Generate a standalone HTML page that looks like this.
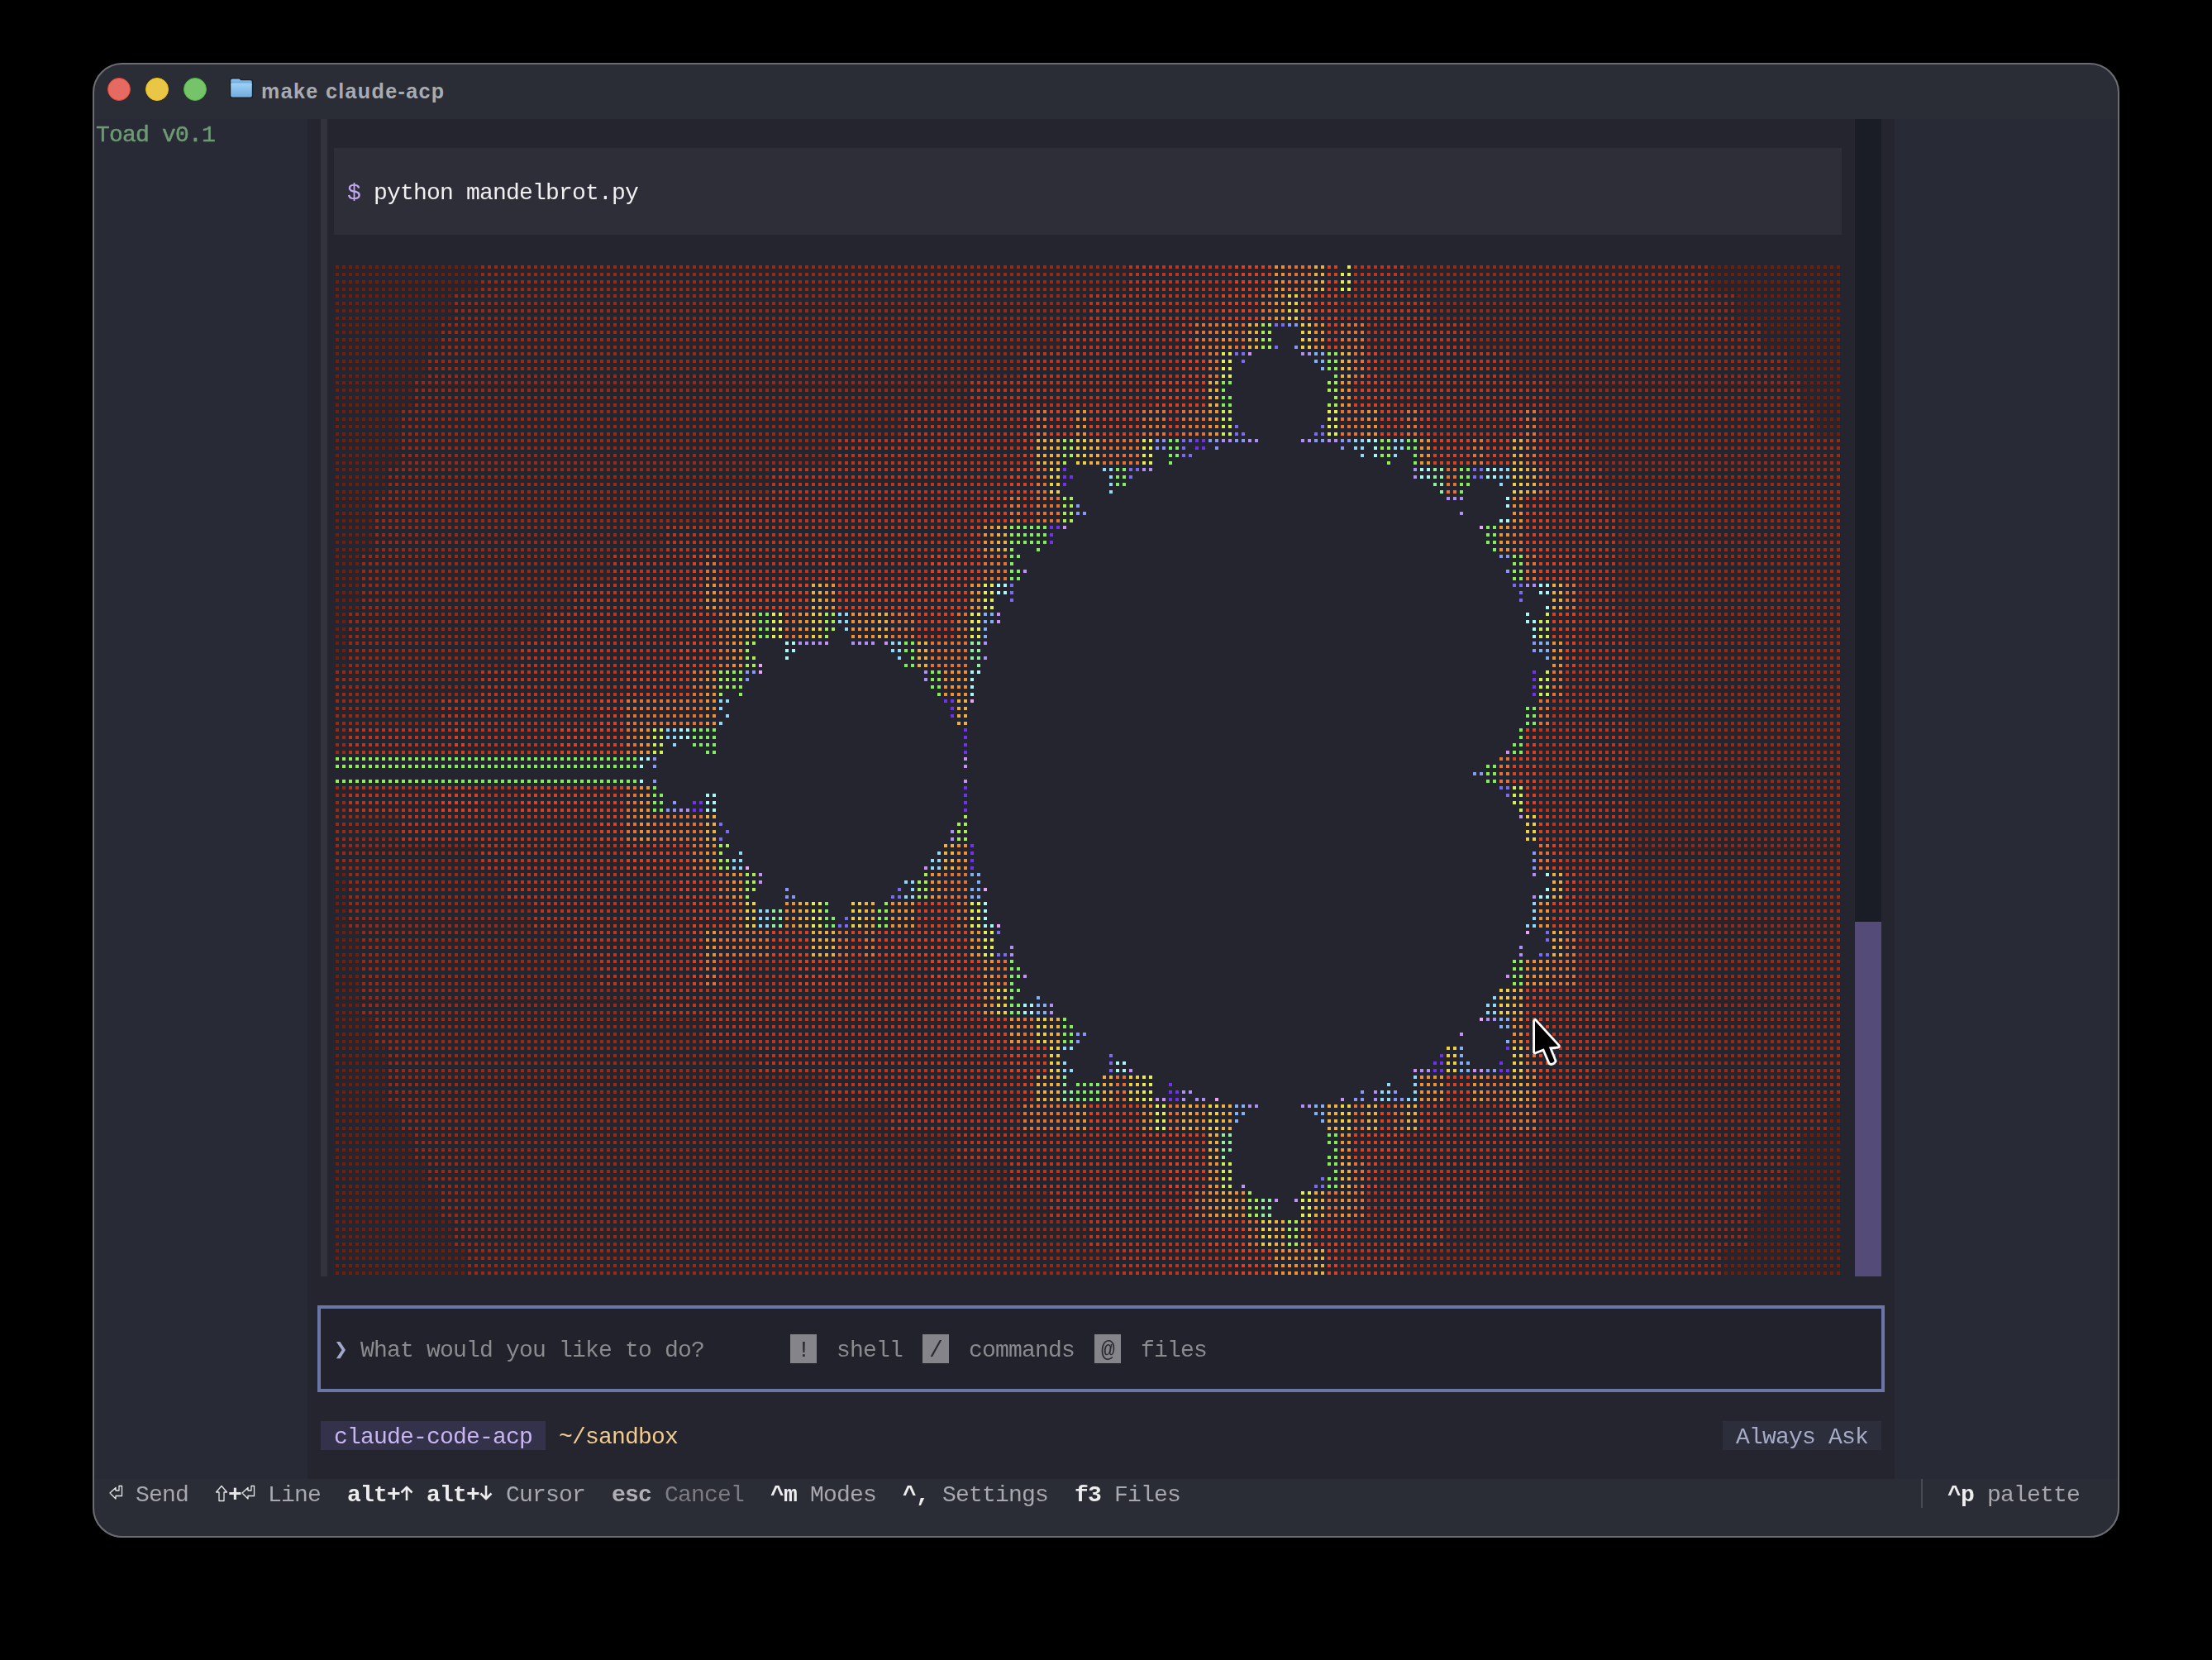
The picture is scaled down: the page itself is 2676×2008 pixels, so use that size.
<!DOCTYPE html>
<html><head><meta charset="utf-8"><style>
html,body{margin:0;padding:0;background:#000;}
body{width:2676px;height:2008px;position:relative;overflow:hidden;}
.win{position:absolute;left:112px;top:76px;width:2452px;height:1784px;border-radius:36px;background:#2a2d36;overflow:hidden;}
.wb{position:absolute;left:112px;top:76px;width:2452px;height:1784px;border-radius:36px;box-sizing:border-box;border:2px solid #6c6d72;pointer-events:none;}
.abs{position:absolute;}
.t{position:absolute;will-change:transform;font-family:"Liberation Mono",monospace;font-size:28px;letter-spacing:-0.8px;line-height:35px;white-space:pre;height:35px;}
.b{font-weight:bold;}
.mb{position:absolute;left:404px;top:319px;}
</style></head><body>
<div class="win"></div>
<div class="abs" style="left:112px;top:144px;width:260px;height:1645px;background:#282a36"></div>
<div class="abs" style="left:372px;top:144px;width:1920px;height:1645px;background:#24252e"></div>
<div class="abs" style="left:2292px;top:144px;width:272px;height:1645px;background:#282a35"></div>
<div class="abs" style="left:112px;top:1789px;width:2452px;height:71px;background:#2a2d36;border-radius:0 0 36px 36px"></div>
<div class="abs" style="left:388px;top:144px;width:8px;height:1400px;background:#32333d"></div>
<div class="abs" style="left:404px;top:179px;width:1824px;height:105px;background:#2e2e38"></div>
<div class="abs" style="left:2244px;top:144px;width:32px;height:1400px;background:#1b1d26"></div>
<div class="abs" style="left:2244px;top:1115px;width:32px;height:429px;background:#544b78"></div>
<div class="abs" style="left:384px;top:1579px;width:1896px;height:105px;box-sizing:border-box;border:4px solid #6a77a6;background:#21222b"></div>
<div class="abs" style="left:956px;top:1614px;width:32px;height:35px;background:#85848a"></div>
<div class="abs" style="left:1116px;top:1614px;width:32px;height:35px;background:#85848a"></div>
<div class="abs" style="left:1324px;top:1614px;width:32px;height:35px;background:#85848a"></div>
<div class="abs" style="left:388px;top:1719px;width:272px;height:35px;background:#33324a"></div>
<div class="abs" style="left:2084px;top:1719px;width:192px;height:35px;background:#2c2e3c"></div>
<div class="abs" style="left:2324px;top:1789px;width:2px;height:35px;background:#4a4b52"></div>
<div class="abs" style="left:130px;top:94px;width:28px;height:28px;border-radius:50%;background:#e46a62;box-sizing:border-box;border:1px solid #f0402f"></div>
<div class="abs" style="left:176px;top:94px;width:28px;height:28px;border-radius:50%;background:#e9c646;box-sizing:border-box;border:1px solid #f4c200"></div>
<div class="abs" style="left:222px;top:94px;width:28px;height:28px;border-radius:50%;background:#76c46a;box-sizing:border-box;border:1px solid #4bb83a"></div>
<svg class="abs" style="left:277px;top:93px" width="30" height="27" viewBox="-1 -1 30 27"><defs><linearGradient id="fg" x1="0" y1="0" x2="0" y2="1"><stop offset="0" stop-color="#9fd2f5"/><stop offset="1" stop-color="#72abdf"/></linearGradient><linearGradient id="bg2" x1="0" y1="0" x2="0" y2="1"><stop offset="0" stop-color="#8cc6f2"/><stop offset="1" stop-color="#5c9bd6"/></linearGradient></defs><path d="M0.5 3Q0.5 0.8 2.5 0.8H11.8L13.6 2.6H25.2Q27.5 2.6 27.5 4.8V22Q27.5 24.2 25.3 24.2H2.7Q0.5 24.2 0.5 22Z" fill="none" stroke="#1d1e23" stroke-width="1.4"/><path d="M1.2 3.2Q1.2 1.5 2.8 1.5H11.5L13.3 3.3H25Q26.8 3.3 26.8 5V9H1.2Z" fill="url(#bg2)"/><rect x="1.2" y="6.4" width="25.6" height="17.1" rx="1.8" fill="url(#fg)"/></svg>
<div class="abs" style="left:316px;top:92px;font-family:'Liberation Sans',sans-serif;font-weight:bold;font-size:25px;letter-spacing:1.4px;line-height:36px;color:#a9abb3;white-space:pre">make claude-acp</div>
<svg class="mb" width="1824" height="1225" viewBox="0 0 1824 1225" shape-rendering="crispEdges"><defs><pattern id="p1" width="16" height="35" patternUnits="userSpaceOnUse"><path fill="#781c0a" d="M2 2h4v4H2zm8 0h4v4h-4zM2 11h4v4H2zm8 0h4v4h-4zM2 20h4v4H2zm8 0h4v4h-4zM2 29h4v4H2zm8 0h4v4h-4z"/></pattern><pattern id="p2" width="16" height="35" patternUnits="userSpaceOnUse"><path fill="#9c2812" d="M2 2h4v4H2zm8 0h4v4h-4zM2 11h4v4H2zm8 0h4v4h-4zM2 20h4v4H2zm8 0h4v4h-4zM2 29h4v4H2zm8 0h4v4h-4z"/></pattern><pattern id="p3" width="16" height="35" patternUnits="userSpaceOnUse"><path fill="#c0341a" d="M2 2h4v4H2zm8 0h4v4h-4zM2 11h4v4H2zm8 0h4v4h-4zM2 20h4v4H2zm8 0h4v4h-4zM2 29h4v4H2zm8 0h4v4h-4z"/></pattern><pattern id="p4" width="16" height="35" patternUnits="userSpaceOnUse"><path fill="#dc401e" d="M2 2h4v4H2zm8 0h4v4h-4zM2 11h4v4H2zm8 0h4v4h-4zM2 20h4v4H2zm8 0h4v4h-4zM2 29h4v4H2zm8 0h4v4h-4z"/></pattern><pattern id="p5" width="16" height="35" patternUnits="userSpaceOnUse"><path fill="#e87030" d="M2 2h4v4H2zm8 0h4v4h-4zM2 11h4v4H2zm8 0h4v4h-4zM2 20h4v4H2zm8 0h4v4h-4zM2 29h4v4H2zm8 0h4v4h-4z"/></pattern><pattern id="p6" width="16" height="35" patternUnits="userSpaceOnUse"><path fill="#f09030" d="M2 2h4v4H2zm8 0h4v4h-4zM2 11h4v4H2zm8 0h4v4h-4zM2 20h4v4H2zm8 0h4v4h-4zM2 29h4v4H2zm8 0h4v4h-4z"/></pattern><pattern id="p7" width="16" height="35" patternUnits="userSpaceOnUse"><path fill="#f0b040" d="M2 2h4v4H2zm8 0h4v4h-4zM2 11h4v4H2zm8 0h4v4h-4zM2 20h4v4H2zm8 0h4v4h-4zM2 29h4v4H2zm8 0h4v4h-4z"/></pattern><pattern id="p8" width="16" height="35" patternUnits="userSpaceOnUse"><path fill="#f0d040" d="M2 2h4v4H2zm8 0h4v4h-4zM2 11h4v4H2zm8 0h4v4h-4zM2 20h4v4H2zm8 0h4v4h-4zM2 29h4v4H2zm8 0h4v4h-4z"/></pattern><pattern id="p9" width="16" height="35" patternUnits="userSpaceOnUse"><path fill="#e8f050" d="M2 2h4v4H2zm8 0h4v4h-4zM2 11h4v4H2zm8 0h4v4h-4zM2 20h4v4H2zm8 0h4v4h-4zM2 29h4v4H2zm8 0h4v4h-4z"/></pattern><pattern id="p10" width="16" height="35" patternUnits="userSpaceOnUse"><path fill="#d0f050" d="M2 2h4v4H2zm8 0h4v4h-4zM2 11h4v4H2zm8 0h4v4h-4zM2 20h4v4H2zm8 0h4v4h-4zM2 29h4v4H2zm8 0h4v4h-4z"/></pattern><pattern id="p11" width="16" height="35" patternUnits="userSpaceOnUse"><path fill="#a8f050" d="M2 2h4v4H2zm8 0h4v4h-4zM2 11h4v4H2zm8 0h4v4h-4zM2 20h4v4H2zm8 0h4v4h-4zM2 29h4v4H2zm8 0h4v4h-4z"/></pattern><pattern id="p12" width="16" height="35" patternUnits="userSpaceOnUse"><path fill="#90f050" d="M2 2h4v4H2zm8 0h4v4h-4zM2 11h4v4H2zm8 0h4v4h-4zM2 20h4v4H2zm8 0h4v4h-4zM2 29h4v4H2zm8 0h4v4h-4z"/></pattern><pattern id="p13" width="16" height="35" patternUnits="userSpaceOnUse"><path fill="#80f050" d="M2 2h4v4H2zm8 0h4v4h-4zM2 11h4v4H2zm8 0h4v4h-4zM2 20h4v4H2zm8 0h4v4h-4zM2 29h4v4H2zm8 0h4v4h-4z"/></pattern><pattern id="p14" width="16" height="35" patternUnits="userSpaceOnUse"><path fill="#80f060" d="M2 2h4v4H2zm8 0h4v4h-4zM2 11h4v4H2zm8 0h4v4h-4zM2 20h4v4H2zm8 0h4v4h-4zM2 29h4v4H2zm8 0h4v4h-4z"/></pattern></defs><rect x="0" y="0" width="176" height="35" fill="url(#p1)"/><rect x="176" y="0" width="784" height="35" fill="url(#p2)"/><rect x="960" y="0" width="128" height="35" fill="url(#p3)"/><rect x="1088" y="0" width="48" height="35" fill="url(#p4)"/><rect x="1136" y="0" width="16" height="35" fill="url(#p6)"/><rect x="1152" y="0" width="32" height="35" fill="url(#p5)"/><rect x="1184" y="0" width="16" height="35" fill="url(#p7)"/><rect x="1200" y="0" width="16" height="35" fill="url(#p4)"/><rect x="1232" y="0" width="64" height="35" fill="url(#p3)"/><rect x="1296" y="0" width="368" height="35" fill="url(#p2)"/><rect x="1664" y="0" width="160" height="35" fill="url(#p1)"/><rect x="0" y="35" width="144" height="35" fill="url(#p1)"/><rect x="144" y="35" width="768" height="35" fill="url(#p2)"/><rect x="912" y="35" width="160" height="35" fill="url(#p3)"/><rect x="1072" y="35" width="48" height="35" fill="url(#p4)"/><rect x="1120" y="35" width="16" height="35" fill="url(#p5)"/><rect x="1136" y="35" width="16" height="35" fill="url(#p6)"/><rect x="1152" y="35" width="16" height="35" fill="url(#p8)"/><rect x="1168" y="35" width="16" height="35" fill="url(#p5)"/><rect x="1184" y="35" width="32" height="35" fill="url(#p4)"/><rect x="1216" y="35" width="112" height="35" fill="url(#p3)"/><rect x="1328" y="35" width="368" height="35" fill="url(#p2)"/><rect x="1696" y="35" width="128" height="35" fill="url(#p1)"/><rect x="0" y="70" width="128" height="35" fill="url(#p1)"/><rect x="128" y="70" width="752" height="35" fill="url(#p2)"/><rect x="880" y="70" width="144" height="35" fill="url(#p3)"/><rect x="1024" y="70" width="16" height="35" fill="url(#p4)"/><rect x="1040" y="70" width="32" height="35" fill="url(#p5)"/><rect x="1072" y="70" width="16" height="35" fill="url(#p6)"/><rect x="1088" y="70" width="16" height="35" fill="url(#p5)"/><rect x="1104" y="70" width="16" height="35" fill="url(#p7)"/><rect x="1120" y="70" width="16" height="35" fill="url(#p11)"/><rect x="1168" y="70" width="16" height="35" fill="url(#p8)"/><rect x="1184" y="70" width="16" height="35" fill="url(#p6)"/><rect x="1200" y="70" width="16" height="35" fill="url(#p4)"/><rect x="1216" y="70" width="32" height="35" fill="url(#p5)"/><rect x="1248" y="70" width="128" height="35" fill="url(#p3)"/><rect x="1376" y="70" width="352" height="35" fill="url(#p2)"/><rect x="1728" y="70" width="96" height="35" fill="url(#p1)"/><rect x="0" y="105" width="112" height="35" fill="url(#p1)"/><rect x="112" y="105" width="720" height="35" fill="url(#p2)"/><rect x="832" y="105" width="192" height="35" fill="url(#p3)"/><rect x="1024" y="105" width="32" height="35" fill="url(#p4)"/><rect x="1056" y="105" width="16" height="35" fill="url(#p5)"/><rect x="1072" y="105" width="16" height="35" fill="url(#p9)"/><rect x="1216" y="105" width="16" height="35" fill="url(#p7)"/><rect x="1232" y="105" width="16" height="35" fill="url(#p5)"/><rect x="1248" y="105" width="16" height="35" fill="url(#p4)"/><rect x="1264" y="105" width="160" height="35" fill="url(#p3)"/><rect x="1424" y="105" width="336" height="35" fill="url(#p2)"/><rect x="1760" y="105" width="64" height="35" fill="url(#p1)"/><rect x="0" y="140" width="96" height="35" fill="url(#p1)"/><rect x="96" y="140" width="672" height="35" fill="url(#p2)"/><rect x="768" y="140" width="224" height="35" fill="url(#p3)"/><rect x="992" y="140" width="64" height="35" fill="url(#p4)"/><rect x="1056" y="140" width="16" height="35" fill="url(#p7)"/><rect x="1216" y="140" width="16" height="35" fill="url(#p6)"/><rect x="1232" y="140" width="48" height="35" fill="url(#p4)"/><rect x="1280" y="140" width="192" height="35" fill="url(#p3)"/><rect x="1472" y="140" width="304" height="35" fill="url(#p2)"/><rect x="1776" y="140" width="48" height="35" fill="url(#p1)"/><rect x="0" y="175" width="80" height="35" fill="url(#p1)"/><rect x="80" y="175" width="608" height="35" fill="url(#p2)"/><rect x="688" y="175" width="144" height="35" fill="url(#p3)"/><rect x="832" y="175" width="16" height="35" fill="url(#p4)"/><rect x="848" y="175" width="16" height="35" fill="url(#p5)"/><rect x="864" y="175" width="32" height="35" fill="url(#p4)"/><rect x="896" y="175" width="16" height="35" fill="url(#p6)"/><rect x="912" y="175" width="64" height="35" fill="url(#p4)"/><rect x="976" y="175" width="32" height="35" fill="url(#p5)"/><rect x="1008" y="175" width="16" height="35" fill="url(#p4)"/><rect x="1024" y="175" width="32" height="35" fill="url(#p5)"/><rect x="1056" y="175" width="16" height="35" fill="url(#p6)"/><rect x="1072" y="175" width="16" height="35" fill="url(#p10)"/><rect x="1200" y="175" width="16" height="35" fill="url(#p9)"/><rect x="1216" y="175" width="32" height="35" fill="url(#p5)"/><rect x="1248" y="175" width="16" height="35" fill="url(#p6)"/><rect x="1264" y="175" width="32" height="35" fill="url(#p4)"/><rect x="1296" y="175" width="16" height="35" fill="url(#p5)"/><rect x="1312" y="175" width="16" height="35" fill="url(#p4)"/><rect x="1328" y="175" width="96" height="35" fill="url(#p3)"/><rect x="1424" y="175" width="16" height="35" fill="url(#p4)"/><rect x="1440" y="175" width="16" height="35" fill="url(#p5)"/><rect x="1456" y="175" width="48" height="35" fill="url(#p3)"/><rect x="1504" y="175" width="288" height="35" fill="url(#p2)"/><rect x="1792" y="175" width="32" height="35" fill="url(#p1)"/><rect x="0" y="210" width="80" height="35" fill="url(#p1)"/><rect x="80" y="210" width="528" height="35" fill="url(#p2)"/><rect x="608" y="210" width="224" height="35" fill="url(#p3)"/><rect x="832" y="210" width="16" height="35" fill="url(#p4)"/><rect x="848" y="210" width="32" height="35" fill="url(#p7)"/><rect x="896" y="210" width="16" height="35" fill="url(#p8)"/><rect x="912" y="210" width="16" height="35" fill="url(#p7)"/><rect x="928" y="210" width="48" height="35" fill="url(#p5)"/><rect x="976" y="210" width="16" height="35" fill="url(#p9)"/><rect x="1312" y="210" width="16" height="35" fill="url(#p6)"/><rect x="1328" y="210" width="48" height="35" fill="url(#p4)"/><rect x="1376" y="210" width="16" height="35" fill="url(#p5)"/><rect x="1392" y="210" width="32" height="35" fill="url(#p4)"/><rect x="1424" y="210" width="16" height="35" fill="url(#p7)"/><rect x="1440" y="210" width="16" height="35" fill="url(#p5)"/><rect x="1456" y="210" width="16" height="35" fill="url(#p4)"/><rect x="1472" y="210" width="48" height="35" fill="url(#p3)"/><rect x="1520" y="210" width="304" height="35" fill="url(#p2)"/><rect x="0" y="245" width="64" height="35" fill="url(#p1)"/><rect x="64" y="245" width="464" height="35" fill="url(#p2)"/><rect x="528" y="245" width="288" height="35" fill="url(#p3)"/><rect x="816" y="245" width="32" height="35" fill="url(#p4)"/><rect x="848" y="245" width="16" height="35" fill="url(#p5)"/><rect x="864" y="245" width="16" height="35" fill="url(#p8)"/><rect x="1344" y="245" width="16" height="35" fill="url(#p5)"/><rect x="1424" y="245" width="16" height="35" fill="url(#p8)"/><rect x="1440" y="245" width="16" height="35" fill="url(#p7)"/><rect x="1456" y="245" width="16" height="35" fill="url(#p5)"/><rect x="1472" y="245" width="64" height="35" fill="url(#p3)"/><rect x="1536" y="245" width="288" height="35" fill="url(#p2)"/><rect x="0" y="280" width="48" height="35" fill="url(#p1)"/><rect x="48" y="280" width="416" height="35" fill="url(#p2)"/><rect x="464" y="280" width="320" height="35" fill="url(#p3)"/><rect x="784" y="280" width="32" height="35" fill="url(#p4)"/><rect x="816" y="280" width="16" height="35" fill="url(#p5)"/><rect x="832" y="280" width="16" height="35" fill="url(#p4)"/><rect x="848" y="280" width="32" height="35" fill="url(#p5)"/><rect x="880" y="280" width="16" height="35" fill="url(#p11)"/><rect x="1424" y="280" width="16" height="35" fill="url(#p6)"/><rect x="1440" y="280" width="32" height="35" fill="url(#p4)"/><rect x="1472" y="280" width="80" height="35" fill="url(#p3)"/><rect x="1552" y="280" width="272" height="35" fill="url(#p2)"/><rect x="0" y="315" width="48" height="35" fill="url(#p1)"/><rect x="48" y="315" width="352" height="35" fill="url(#p2)"/><rect x="400" y="315" width="368" height="35" fill="url(#p3)"/><rect x="768" y="315" width="16" height="35" fill="url(#p4)"/><rect x="784" y="315" width="16" height="35" fill="url(#p6)"/><rect x="800" y="315" width="16" height="35" fill="url(#p7)"/><rect x="1408" y="315" width="16" height="35" fill="url(#p6)"/><rect x="1424" y="315" width="16" height="35" fill="url(#p5)"/><rect x="1440" y="315" width="32" height="35" fill="url(#p4)"/><rect x="1472" y="315" width="80" height="35" fill="url(#p3)"/><rect x="1552" y="315" width="272" height="35" fill="url(#p2)"/><rect x="0" y="350" width="32" height="35" fill="url(#p1)"/><rect x="32" y="350" width="304" height="35" fill="url(#p2)"/><rect x="336" y="350" width="96" height="35" fill="url(#p3)"/><rect x="432" y="350" width="16" height="35" fill="url(#p4)"/><rect x="448" y="350" width="16" height="35" fill="url(#p5)"/><rect x="464" y="350" width="16" height="35" fill="url(#p4)"/><rect x="480" y="350" width="112" height="35" fill="url(#p3)"/><rect x="592" y="350" width="16" height="35" fill="url(#p4)"/><rect x="608" y="350" width="112" height="35" fill="url(#p3)"/><rect x="720" y="350" width="64" height="35" fill="url(#p4)"/><rect x="784" y="350" width="32" height="35" fill="url(#p5)"/><rect x="1424" y="350" width="16" height="35" fill="url(#p12)"/><rect x="1440" y="350" width="16" height="35" fill="url(#p5)"/><rect x="1456" y="350" width="48" height="35" fill="url(#p4)"/><rect x="1504" y="350" width="48" height="35" fill="url(#p3)"/><rect x="1552" y="350" width="272" height="35" fill="url(#p2)"/><rect x="0" y="385" width="32" height="35" fill="url(#p1)"/><rect x="32" y="385" width="256" height="35" fill="url(#p2)"/><rect x="288" y="385" width="144" height="35" fill="url(#p3)"/><rect x="432" y="385" width="16" height="35" fill="url(#p4)"/><rect x="448" y="385" width="16" height="35" fill="url(#p6)"/><rect x="464" y="385" width="16" height="35" fill="url(#p5)"/><rect x="480" y="385" width="96" height="35" fill="url(#p4)"/><rect x="576" y="385" width="16" height="35" fill="url(#p7)"/><rect x="592" y="385" width="16" height="35" fill="url(#p6)"/><rect x="608" y="385" width="160" height="35" fill="url(#p4)"/><rect x="768" y="385" width="16" height="35" fill="url(#p6)"/><rect x="784" y="385" width="16" height="35" fill="url(#p9)"/><rect x="1472" y="385" width="16" height="35" fill="url(#p7)"/><rect x="1488" y="385" width="16" height="35" fill="url(#p5)"/><rect x="1504" y="385" width="48" height="35" fill="url(#p3)"/><rect x="1552" y="385" width="272" height="35" fill="url(#p2)"/><rect x="0" y="420" width="16" height="35" fill="url(#p1)"/><rect x="16" y="420" width="240" height="35" fill="url(#p2)"/><rect x="256" y="420" width="176" height="35" fill="url(#p3)"/><rect x="432" y="420" width="32" height="35" fill="url(#p4)"/><rect x="464" y="420" width="16" height="35" fill="url(#p5)"/><rect x="480" y="420" width="16" height="35" fill="url(#p6)"/><rect x="496" y="420" width="16" height="35" fill="url(#p7)"/><rect x="512" y="420" width="16" height="35" fill="url(#p13)"/><rect x="528" y="420" width="16" height="35" fill="url(#p9)"/><rect x="544" y="420" width="16" height="35" fill="url(#p5)"/><rect x="560" y="420" width="16" height="35" fill="url(#p6)"/><rect x="576" y="420" width="16" height="35" fill="url(#p8)"/><rect x="624" y="420" width="32" height="35" fill="url(#p6)"/><rect x="656" y="420" width="16" height="35" fill="url(#p7)"/><rect x="672" y="420" width="32" height="35" fill="url(#p5)"/><rect x="704" y="420" width="48" height="35" fill="url(#p4)"/><rect x="752" y="420" width="16" height="35" fill="url(#p5)"/><rect x="768" y="420" width="16" height="35" fill="url(#p9)"/><rect x="1472" y="420" width="32" height="35" fill="url(#p4)"/><rect x="1504" y="420" width="64" height="35" fill="url(#p3)"/><rect x="1568" y="420" width="256" height="35" fill="url(#p2)"/><rect x="0" y="455" width="16" height="35" fill="url(#p1)"/><rect x="16" y="455" width="208" height="35" fill="url(#p2)"/><rect x="224" y="455" width="192" height="35" fill="url(#p3)"/><rect x="416" y="455" width="48" height="35" fill="url(#p4)"/><rect x="464" y="455" width="16" height="35" fill="url(#p5)"/><rect x="480" y="455" width="16" height="35" fill="url(#p6)"/><rect x="704" y="455" width="16" height="35" fill="url(#p7)"/><rect x="720" y="455" width="48" height="35" fill="url(#p5)"/><rect x="1472" y="455" width="16" height="35" fill="url(#p6)"/><rect x="1488" y="455" width="16" height="35" fill="url(#p4)"/><rect x="1504" y="455" width="64" height="35" fill="url(#p3)"/><rect x="1568" y="455" width="256" height="35" fill="url(#p2)"/><rect x="0" y="490" width="176" height="35" fill="url(#p2)"/><rect x="176" y="490" width="176" height="35" fill="url(#p3)"/><rect x="352" y="490" width="80" height="35" fill="url(#p4)"/><rect x="432" y="490" width="16" height="35" fill="url(#p5)"/><rect x="448" y="490" width="16" height="35" fill="url(#p6)"/><rect x="736" y="490" width="32" height="35" fill="url(#p6)"/><rect x="1472" y="490" width="16" height="35" fill="url(#p5)"/><rect x="1488" y="490" width="80" height="35" fill="url(#p3)"/><rect x="1568" y="490" width="256" height="35" fill="url(#p2)"/><rect x="0" y="525" width="128" height="35" fill="url(#p2)"/><rect x="128" y="525" width="192" height="35" fill="url(#p3)"/><rect x="320" y="525" width="32" height="35" fill="url(#p4)"/><rect x="352" y="525" width="96" height="35" fill="url(#p5)"/><rect x="448" y="525" width="16" height="35" fill="url(#p6)"/><rect x="752" y="525" width="16" height="35" fill="url(#p7)"/><rect x="1456" y="525" width="16" height="35" fill="url(#p5)"/><rect x="1472" y="525" width="96" height="35" fill="url(#p3)"/><rect x="1568" y="525" width="256" height="35" fill="url(#p2)"/><rect x="0" y="560" width="16" height="35" fill="url(#p2)"/><rect x="16" y="560" width="128" height="35" fill="url(#p3)"/><rect x="144" y="560" width="16" height="35" fill="url(#p4)"/><rect x="160" y="560" width="112" height="35" fill="url(#p3)"/><rect x="272" y="560" width="80" height="35" fill="url(#p4)"/><rect x="352" y="560" width="16" height="35" fill="url(#p5)"/><rect x="368" y="560" width="16" height="35" fill="url(#p6)"/><rect x="384" y="560" width="16" height="35" fill="url(#p10)"/><rect x="448" y="560" width="16" height="35" fill="url(#p14)"/><rect x="1440" y="560" width="16" height="35" fill="url(#p4)"/><rect x="1456" y="560" width="112" height="35" fill="url(#p3)"/><rect x="1568" y="560" width="256" height="35" fill="url(#p2)"/><rect x="1408" y="595" width="16" height="35" fill="url(#p5)"/><rect x="1424" y="595" width="32" height="35" fill="url(#p4)"/><rect x="1456" y="595" width="112" height="35" fill="url(#p3)"/><rect x="1568" y="595" width="256" height="35" fill="url(#p2)"/><rect x="0" y="630" width="16" height="35" fill="url(#p2)"/><rect x="16" y="630" width="112" height="35" fill="url(#p3)"/><rect x="128" y="630" width="48" height="35" fill="url(#p4)"/><rect x="176" y="630" width="48" height="35" fill="url(#p3)"/><rect x="224" y="630" width="128" height="35" fill="url(#p4)"/><rect x="352" y="630" width="16" height="35" fill="url(#p5)"/><rect x="368" y="630" width="16" height="35" fill="url(#p6)"/><rect x="1440" y="630" width="16" height="35" fill="url(#p4)"/><rect x="1456" y="630" width="112" height="35" fill="url(#p3)"/><rect x="1568" y="630" width="256" height="35" fill="url(#p2)"/><rect x="0" y="665" width="80" height="35" fill="url(#p2)"/><rect x="80" y="665" width="240" height="35" fill="url(#p3)"/><rect x="320" y="665" width="32" height="35" fill="url(#p4)"/><rect x="352" y="665" width="16" height="35" fill="url(#p5)"/><rect x="368" y="665" width="16" height="35" fill="url(#p6)"/><rect x="384" y="665" width="64" height="35" fill="url(#p5)"/><rect x="448" y="665" width="16" height="35" fill="url(#p7)"/><rect x="1440" y="665" width="16" height="35" fill="url(#p8)"/><rect x="1456" y="665" width="16" height="35" fill="url(#p4)"/><rect x="1472" y="665" width="96" height="35" fill="url(#p3)"/><rect x="1568" y="665" width="256" height="35" fill="url(#p2)"/><rect x="0" y="700" width="176" height="35" fill="url(#p2)"/><rect x="176" y="700" width="176" height="35" fill="url(#p3)"/><rect x="352" y="700" width="80" height="35" fill="url(#p4)"/><rect x="432" y="700" width="16" height="35" fill="url(#p5)"/><rect x="448" y="700" width="16" height="35" fill="url(#p6)"/><rect x="736" y="700" width="16" height="35" fill="url(#p7)"/><rect x="752" y="700" width="16" height="35" fill="url(#p6)"/><rect x="1456" y="700" width="16" height="35" fill="url(#p5)"/><rect x="1472" y="700" width="16" height="35" fill="url(#p4)"/><rect x="1488" y="700" width="80" height="35" fill="url(#p3)"/><rect x="1568" y="700" width="256" height="35" fill="url(#p2)"/><rect x="0" y="735" width="16" height="35" fill="url(#p1)"/><rect x="16" y="735" width="192" height="35" fill="url(#p2)"/><rect x="208" y="735" width="208" height="35" fill="url(#p3)"/><rect x="416" y="735" width="48" height="35" fill="url(#p4)"/><rect x="464" y="735" width="16" height="35" fill="url(#p5)"/><rect x="480" y="735" width="16" height="35" fill="url(#p6)"/><rect x="720" y="735" width="16" height="35" fill="url(#p6)"/><rect x="736" y="735" width="32" height="35" fill="url(#p5)"/><rect x="1472" y="735" width="16" height="35" fill="url(#p7)"/><rect x="1488" y="735" width="16" height="35" fill="url(#p4)"/><rect x="1504" y="735" width="64" height="35" fill="url(#p3)"/><rect x="1568" y="735" width="256" height="35" fill="url(#p2)"/><rect x="0" y="770" width="16" height="35" fill="url(#p1)"/><rect x="16" y="770" width="224" height="35" fill="url(#p2)"/><rect x="240" y="770" width="192" height="35" fill="url(#p3)"/><rect x="432" y="770" width="48" height="35" fill="url(#p4)"/><rect x="480" y="770" width="16" height="35" fill="url(#p5)"/><rect x="496" y="770" width="16" height="35" fill="url(#p8)"/><rect x="544" y="770" width="16" height="35" fill="url(#p6)"/><rect x="560" y="770" width="16" height="35" fill="url(#p7)"/><rect x="576" y="770" width="16" height="35" fill="url(#p9)"/><rect x="624" y="770" width="16" height="35" fill="url(#p8)"/><rect x="640" y="770" width="16" height="35" fill="url(#p7)"/><rect x="672" y="770" width="32" height="35" fill="url(#p6)"/><rect x="704" y="770" width="48" height="35" fill="url(#p4)"/><rect x="752" y="770" width="16" height="35" fill="url(#p5)"/><rect x="768" y="770" width="16" height="35" fill="url(#p9)"/><rect x="1456" y="770" width="16" height="35" fill="url(#p6)"/><rect x="1472" y="770" width="32" height="35" fill="url(#p4)"/><rect x="1504" y="770" width="64" height="35" fill="url(#p3)"/><rect x="1568" y="770" width="256" height="35" fill="url(#p2)"/><rect x="0" y="805" width="32" height="35" fill="url(#p1)"/><rect x="32" y="805" width="256" height="35" fill="url(#p2)"/><rect x="288" y="805" width="144" height="35" fill="url(#p3)"/><rect x="432" y="805" width="16" height="35" fill="url(#p4)"/><rect x="448" y="805" width="16" height="35" fill="url(#p6)"/><rect x="464" y="805" width="64" height="35" fill="url(#p5)"/><rect x="528" y="805" width="48" height="35" fill="url(#p4)"/><rect x="576" y="805" width="32" height="35" fill="url(#p7)"/><rect x="608" y="805" width="16" height="35" fill="url(#p5)"/><rect x="624" y="805" width="16" height="35" fill="url(#p4)"/><rect x="640" y="805" width="16" height="35" fill="url(#p5)"/><rect x="656" y="805" width="112" height="35" fill="url(#p4)"/><rect x="768" y="805" width="16" height="35" fill="url(#p6)"/><rect x="784" y="805" width="16" height="35" fill="url(#p9)"/><rect x="1472" y="805" width="16" height="35" fill="url(#p7)"/><rect x="1488" y="805" width="16" height="35" fill="url(#p5)"/><rect x="1504" y="805" width="64" height="35" fill="url(#p3)"/><rect x="1568" y="805" width="256" height="35" fill="url(#p2)"/><rect x="0" y="840" width="32" height="35" fill="url(#p1)"/><rect x="32" y="840" width="288" height="35" fill="url(#p2)"/><rect x="320" y="840" width="112" height="35" fill="url(#p3)"/><rect x="432" y="840" width="16" height="35" fill="url(#p4)"/><rect x="448" y="840" width="16" height="35" fill="url(#p5)"/><rect x="464" y="840" width="32" height="35" fill="url(#p4)"/><rect x="496" y="840" width="64" height="35" fill="url(#p3)"/><rect x="560" y="840" width="64" height="35" fill="url(#p4)"/><rect x="624" y="840" width="96" height="35" fill="url(#p3)"/><rect x="720" y="840" width="64" height="35" fill="url(#p4)"/><rect x="784" y="840" width="16" height="35" fill="url(#p6)"/><rect x="800" y="840" width="16" height="35" fill="url(#p5)"/><rect x="1424" y="840" width="16" height="35" fill="url(#p12)"/><rect x="1440" y="840" width="32" height="35" fill="url(#p6)"/><rect x="1472" y="840" width="32" height="35" fill="url(#p5)"/><rect x="1504" y="840" width="48" height="35" fill="url(#p3)"/><rect x="1552" y="840" width="272" height="35" fill="url(#p2)"/><rect x="0" y="875" width="32" height="35" fill="url(#p1)"/><rect x="32" y="875" width="352" height="35" fill="url(#p2)"/><rect x="384" y="875" width="368" height="35" fill="url(#p3)"/><rect x="752" y="875" width="32" height="35" fill="url(#p4)"/><rect x="784" y="875" width="16" height="35" fill="url(#p6)"/><rect x="800" y="875" width="16" height="35" fill="url(#p8)"/><rect x="1408" y="875" width="16" height="35" fill="url(#p8)"/><rect x="1424" y="875" width="16" height="35" fill="url(#p7)"/><rect x="1440" y="875" width="32" height="35" fill="url(#p4)"/><rect x="1472" y="875" width="80" height="35" fill="url(#p3)"/><rect x="1552" y="875" width="272" height="35" fill="url(#p2)"/><rect x="0" y="910" width="48" height="35" fill="url(#p1)"/><rect x="48" y="910" width="400" height="35" fill="url(#p2)"/><rect x="448" y="910" width="336" height="35" fill="url(#p3)"/><rect x="784" y="910" width="32" height="35" fill="url(#p4)"/><rect x="816" y="910" width="16" height="35" fill="url(#p6)"/><rect x="832" y="910" width="16" height="35" fill="url(#p5)"/><rect x="848" y="910" width="16" height="35" fill="url(#p8)"/><rect x="864" y="910" width="16" height="35" fill="url(#p7)"/><rect x="1424" y="910" width="16" height="35" fill="url(#p6)"/><rect x="1440" y="910" width="32" height="35" fill="url(#p4)"/><rect x="1472" y="910" width="80" height="35" fill="url(#p3)"/><rect x="1552" y="910" width="272" height="35" fill="url(#p2)"/><rect x="0" y="945" width="64" height="35" fill="url(#p1)"/><rect x="64" y="945" width="448" height="35" fill="url(#p2)"/><rect x="512" y="945" width="304" height="35" fill="url(#p3)"/><rect x="816" y="945" width="48" height="35" fill="url(#p4)"/><rect x="864" y="945" width="16" height="35" fill="url(#p8)"/><rect x="1344" y="945" width="16" height="35" fill="url(#p8)"/><rect x="1424" y="945" width="16" height="35" fill="url(#p8)"/><rect x="1440" y="945" width="16" height="35" fill="url(#p5)"/><rect x="1456" y="945" width="16" height="35" fill="url(#p4)"/><rect x="1472" y="945" width="64" height="35" fill="url(#p3)"/><rect x="1536" y="945" width="288" height="35" fill="url(#p2)"/><rect x="0" y="980" width="64" height="35" fill="url(#p1)"/><rect x="64" y="980" width="528" height="35" fill="url(#p2)"/><rect x="592" y="980" width="240" height="35" fill="url(#p3)"/><rect x="832" y="980" width="16" height="35" fill="url(#p4)"/><rect x="848" y="980" width="32" height="35" fill="url(#p7)"/><rect x="928" y="980" width="16" height="35" fill="url(#p7)"/><rect x="944" y="980" width="16" height="35" fill="url(#p5)"/><rect x="960" y="980" width="16" height="35" fill="url(#p8)"/><rect x="976" y="980" width="16" height="35" fill="url(#p9)"/><rect x="1312" y="980" width="32" height="35" fill="url(#p6)"/><rect x="1344" y="980" width="32" height="35" fill="url(#p4)"/><rect x="1376" y="980" width="16" height="35" fill="url(#p6)"/><rect x="1392" y="980" width="32" height="35" fill="url(#p5)"/><rect x="1424" y="980" width="16" height="35" fill="url(#p7)"/><rect x="1440" y="980" width="16" height="35" fill="url(#p6)"/><rect x="1456" y="980" width="16" height="35" fill="url(#p4)"/><rect x="1472" y="980" width="48" height="35" fill="url(#p3)"/><rect x="1520" y="980" width="304" height="35" fill="url(#p2)"/><rect x="0" y="1015" width="80" height="35" fill="url(#p1)"/><rect x="80" y="1015" width="592" height="35" fill="url(#p2)"/><rect x="672" y="1015" width="160" height="35" fill="url(#p3)"/><rect x="832" y="1015" width="64" height="35" fill="url(#p5)"/><rect x="896" y="1015" width="16" height="35" fill="url(#p6)"/><rect x="912" y="1015" width="64" height="35" fill="url(#p4)"/><rect x="976" y="1015" width="16" height="35" fill="url(#p6)"/><rect x="992" y="1015" width="16" height="35" fill="url(#p9)"/><rect x="1008" y="1015" width="16" height="35" fill="url(#p5)"/><rect x="1024" y="1015" width="16" height="35" fill="url(#p7)"/><rect x="1040" y="1015" width="16" height="35" fill="url(#p6)"/><rect x="1056" y="1015" width="16" height="35" fill="url(#p8)"/><rect x="1072" y="1015" width="16" height="35" fill="url(#p7)"/><rect x="1200" y="1015" width="16" height="35" fill="url(#p7)"/><rect x="1216" y="1015" width="16" height="35" fill="url(#p8)"/><rect x="1232" y="1015" width="16" height="35" fill="url(#p5)"/><rect x="1248" y="1015" width="16" height="35" fill="url(#p7)"/><rect x="1264" y="1015" width="16" height="35" fill="url(#p4)"/><rect x="1280" y="1015" width="16" height="35" fill="url(#p5)"/><rect x="1296" y="1015" width="16" height="35" fill="url(#p7)"/><rect x="1312" y="1015" width="32" height="35" fill="url(#p4)"/><rect x="1344" y="1015" width="64" height="35" fill="url(#p3)"/><rect x="1408" y="1015" width="16" height="35" fill="url(#p4)"/><rect x="1424" y="1015" width="32" height="35" fill="url(#p5)"/><rect x="1456" y="1015" width="48" height="35" fill="url(#p3)"/><rect x="1504" y="1015" width="304" height="35" fill="url(#p2)"/><rect x="1808" y="1015" width="16" height="35" fill="url(#p1)"/><rect x="0" y="1050" width="96" height="35" fill="url(#p1)"/><rect x="96" y="1050" width="656" height="35" fill="url(#p2)"/><rect x="752" y="1050" width="224" height="35" fill="url(#p3)"/><rect x="976" y="1050" width="80" height="35" fill="url(#p4)"/><rect x="1056" y="1050" width="16" height="35" fill="url(#p7)"/><rect x="1216" y="1050" width="16" height="35" fill="url(#p6)"/><rect x="1232" y="1050" width="64" height="35" fill="url(#p4)"/><rect x="1296" y="1050" width="176" height="35" fill="url(#p3)"/><rect x="1472" y="1050" width="304" height="35" fill="url(#p2)"/><rect x="1776" y="1050" width="48" height="35" fill="url(#p1)"/><rect x="0" y="1085" width="112" height="35" fill="url(#p1)"/><rect x="112" y="1085" width="704" height="35" fill="url(#p2)"/><rect x="816" y="1085" width="192" height="35" fill="url(#p3)"/><rect x="1008" y="1085" width="48" height="35" fill="url(#p4)"/><rect x="1056" y="1085" width="16" height="35" fill="url(#p6)"/><rect x="1072" y="1085" width="16" height="35" fill="url(#p10)"/><rect x="1216" y="1085" width="16" height="35" fill="url(#p7)"/><rect x="1232" y="1085" width="16" height="35" fill="url(#p5)"/><rect x="1248" y="1085" width="16" height="35" fill="url(#p4)"/><rect x="1264" y="1085" width="176" height="35" fill="url(#p3)"/><rect x="1440" y="1085" width="320" height="35" fill="url(#p2)"/><rect x="1760" y="1085" width="64" height="35" fill="url(#p1)"/><rect x="0" y="1120" width="128" height="35" fill="url(#p1)"/><rect x="128" y="1120" width="736" height="35" fill="url(#p2)"/><rect x="864" y="1120" width="160" height="35" fill="url(#p3)"/><rect x="1024" y="1120" width="16" height="35" fill="url(#p4)"/><rect x="1040" y="1120" width="16" height="35" fill="url(#p5)"/><rect x="1056" y="1120" width="16" height="35" fill="url(#p6)"/><rect x="1072" y="1120" width="16" height="35" fill="url(#p7)"/><rect x="1088" y="1120" width="16" height="35" fill="url(#p6)"/><rect x="1168" y="1120" width="16" height="35" fill="url(#p9)"/><rect x="1184" y="1120" width="16" height="35" fill="url(#p7)"/><rect x="1200" y="1120" width="16" height="35" fill="url(#p5)"/><rect x="1216" y="1120" width="16" height="35" fill="url(#p6)"/><rect x="1232" y="1120" width="16" height="35" fill="url(#p5)"/><rect x="1248" y="1120" width="144" height="35" fill="url(#p3)"/><rect x="1392" y="1120" width="336" height="35" fill="url(#p2)"/><rect x="1728" y="1120" width="96" height="35" fill="url(#p1)"/><rect x="0" y="1155" width="144" height="35" fill="url(#p1)"/><rect x="144" y="1155" width="768" height="35" fill="url(#p2)"/><rect x="912" y="1155" width="144" height="35" fill="url(#p3)"/><rect x="1056" y="1155" width="48" height="35" fill="url(#p4)"/><rect x="1104" y="1155" width="16" height="35" fill="url(#p5)"/><rect x="1120" y="1155" width="16" height="35" fill="url(#p8)"/><rect x="1136" y="1155" width="16" height="35" fill="url(#p7)"/><rect x="1152" y="1155" width="16" height="35" fill="url(#p11)"/><rect x="1168" y="1155" width="16" height="35" fill="url(#p6)"/><rect x="1184" y="1155" width="48" height="35" fill="url(#p4)"/><rect x="1232" y="1155" width="112" height="35" fill="url(#p3)"/><rect x="1344" y="1155" width="368" height="35" fill="url(#p2)"/><rect x="1712" y="1155" width="112" height="35" fill="url(#p1)"/><rect x="0" y="1190" width="160" height="35" fill="url(#p1)"/><rect x="160" y="1190" width="784" height="35" fill="url(#p2)"/><rect x="944" y="1190" width="144" height="35" fill="url(#p3)"/><rect x="1088" y="1190" width="48" height="35" fill="url(#p4)"/><rect x="1136" y="1190" width="32" height="35" fill="url(#p6)"/><rect x="1168" y="1190" width="16" height="35" fill="url(#p5)"/><rect x="1184" y="1190" width="16" height="35" fill="url(#p7)"/><rect x="1200" y="1190" width="16" height="35" fill="url(#p4)"/><rect x="1216" y="1190" width="80" height="35" fill="url(#p3)"/><rect x="1296" y="1190" width="384" height="35" fill="url(#p2)"/><rect x="1680" y="1190" width="144" height="35" fill="url(#p1)"/><path fill="#e8f050" d="M1226 2h4v4h-4zM1218 11h4v4h-4zM1226 11h4v4h-4zM1218 20h4v4h-4zM1226 20h4v4h-4zM1218 29h4v4h-4zM1226 29h4v4h-4z"/><path fill="#d0f050" d="M1466 422h4v4h-4zM1458 431h4v4h-4zM1466 431h4v4h-4zM1458 440h4v4h-4zM1466 440h4v4h-4zM1458 449h4v4h-4zM1466 449h4v4h-4zM1466 492h4v4h-4zM1458 501h4v4h-4zM1466 501h4v4h-4zM1458 510h4v4h-4zM1466 510h4v4h-4zM1458 519h4v4h-4zM1466 519h4v4h-4zM1426 632h4v4h-4zM1434 632h4v4h-4zM1426 641h4v4h-4zM1434 641h4v4h-4zM1426 650h4v4h-4zM1434 650h4v4h-4zM1434 659h4v4h-4z"/><path fill="#a8f050" d="M1202 142h4v4h-4zM1210 142h4v4h-4zM1202 151h4v4h-4zM1210 151h4v4h-4zM1210 160h4v4h-4zM1202 169h4v4h-4zM1210 169h4v4h-4zM882 212h4v4h-4zM890 212h4v4h-4zM882 221h4v4h-4zM890 221h4v4h-4zM882 230h4v4h-4zM890 230h4v4h-4zM882 239h4v4h-4zM594 422h4v4h-4zM602 422h4v4h-4zM594 431h4v4h-4zM602 431h4v4h-4zM594 440h4v4h-4zM602 440h4v4h-4zM594 449h4v4h-4zM498 457h4v4h-4zM506 457h4v4h-4zM498 466h4v4h-4zM498 475h4v4h-4zM506 475h4v4h-4zM498 484h4v4h-4zM506 484h4v4h-4zM466 492h4v4h-4zM474 492h4v4h-4zM466 501h4v4h-4zM474 501h4v4h-4zM466 510h4v4h-4zM474 510h4v4h-4zM466 519h4v4h-4zM762 667h4v4h-4zM754 676h4v4h-4zM762 676h4v4h-4zM754 685h4v4h-4zM762 685h4v4h-4zM754 694h4v4h-4zM762 694h4v4h-4zM466 702h4v4h-4zM474 702h4v4h-4zM466 711h4v4h-4zM466 720h4v4h-4zM474 720h4v4h-4zM466 729h4v4h-4zM474 729h4v4h-4zM498 737h4v4h-4zM506 737h4v4h-4zM498 746h4v4h-4zM506 746h4v4h-4zM498 755h4v4h-4zM506 755h4v4h-4zM498 764h4v4h-4zM714 737h4v4h-4zM706 746h4v4h-4zM714 746h4v4h-4zM706 755h4v4h-4zM714 755h4v4h-4zM706 764h4v4h-4zM714 764h4v4h-4zM1106 1122h4v4h-4zM1106 1131h4v4h-4zM1114 1131h4v4h-4zM1106 1140h4v4h-4zM1114 1140h4v4h-4zM1106 1149h4v4h-4zM1114 1149h4v4h-4z"/><path fill="#90f050" d="M1202 107h4v4h-4zM1210 107h4v4h-4zM1202 116h4v4h-4zM1210 116h4v4h-4zM1202 125h4v4h-4zM1210 125h4v4h-4zM1210 134h4v4h-4zM1266 212h4v4h-4zM1274 212h4v4h-4zM1266 221h4v4h-4zM1274 221h4v4h-4zM1266 230h4v4h-4zM1274 230h4v4h-4zM1274 239h4v4h-4zM818 317h4v4h-4zM826 317h4v4h-4zM818 326h4v4h-4zM826 326h4v4h-4zM818 335h4v4h-4zM826 335h4v4h-4zM818 344h4v4h-4zM482 492h4v4h-4zM490 492h4v4h-4zM482 501h4v4h-4zM490 501h4v4h-4zM482 510h4v4h-4zM490 510h4v4h-4zM490 519h4v4h-4zM2 597h4v4h-4zM10 597h4v4h-4zM2 606h4v4h-4zM10 606h4v4h-4zM2 624h4v4h-4zM10 624h4v4h-4zM18 597h4v4h-4zM26 597h4v4h-4zM18 606h4v4h-4zM26 606h4v4h-4zM18 624h4v4h-4zM26 624h4v4h-4zM34 597h4v4h-4zM42 597h4v4h-4zM34 606h4v4h-4zM42 606h4v4h-4zM34 624h4v4h-4zM42 624h4v4h-4zM50 597h4v4h-4zM58 597h4v4h-4zM50 606h4v4h-4zM58 606h4v4h-4zM50 624h4v4h-4zM58 624h4v4h-4zM66 597h4v4h-4zM74 597h4v4h-4zM66 606h4v4h-4zM74 606h4v4h-4zM66 624h4v4h-4zM74 624h4v4h-4zM82 597h4v4h-4zM90 597h4v4h-4zM82 606h4v4h-4zM90 606h4v4h-4zM82 624h4v4h-4zM90 624h4v4h-4zM98 597h4v4h-4zM106 597h4v4h-4zM98 606h4v4h-4zM106 606h4v4h-4zM98 624h4v4h-4zM106 624h4v4h-4zM666 772h4v4h-4zM658 781h4v4h-4zM666 781h4v4h-4zM658 790h4v4h-4zM666 790h4v4h-4zM658 799h4v4h-4zM666 799h4v4h-4z"/><path fill="#80f050" d="M1074 142h4v4h-4zM1082 142h4v4h-4zM1074 151h4v4h-4zM1074 160h4v4h-4zM1082 160h4v4h-4zM1074 169h4v4h-4zM1082 169h4v4h-4zM1362 247h4v4h-4zM1370 247h4v4h-4zM1362 256h4v4h-4zM1370 256h4v4h-4zM1362 265h4v4h-4zM1370 265h4v4h-4zM1362 274h4v4h-4zM850 317h4v4h-4zM858 317h4v4h-4zM850 326h4v4h-4zM858 326h4v4h-4zM850 335h4v4h-4zM858 335h4v4h-4zM850 344h4v4h-4zM690 457h4v4h-4zM698 457h4v4h-4zM690 466h4v4h-4zM698 466h4v4h-4zM698 475h4v4h-4zM690 484h4v4h-4zM698 484h4v4h-4zM722 492h4v4h-4zM730 492h4v4h-4zM722 501h4v4h-4zM730 501h4v4h-4zM722 510h4v4h-4zM730 510h4v4h-4zM730 519h4v4h-4zM1434 562h4v4h-4zM1434 571h4v4h-4zM1426 580h4v4h-4zM1434 580h4v4h-4zM1426 589h4v4h-4zM1434 589h4v4h-4zM114 597h4v4h-4zM122 597h4v4h-4zM114 606h4v4h-4zM122 606h4v4h-4zM114 624h4v4h-4zM122 624h4v4h-4zM130 597h4v4h-4zM138 597h4v4h-4zM130 606h4v4h-4zM138 606h4v4h-4zM130 624h4v4h-4zM138 624h4v4h-4zM146 597h4v4h-4zM154 597h4v4h-4zM146 606h4v4h-4zM154 606h4v4h-4zM146 624h4v4h-4zM154 624h4v4h-4zM162 597h4v4h-4zM170 597h4v4h-4zM162 606h4v4h-4zM170 606h4v4h-4zM162 624h4v4h-4zM170 624h4v4h-4zM178 597h4v4h-4zM186 597h4v4h-4zM178 606h4v4h-4zM186 606h4v4h-4zM178 624h4v4h-4zM186 624h4v4h-4zM194 597h4v4h-4zM202 597h4v4h-4zM194 606h4v4h-4zM202 606h4v4h-4zM194 624h4v4h-4zM202 624h4v4h-4zM210 597h4v4h-4zM218 597h4v4h-4zM210 606h4v4h-4zM218 606h4v4h-4zM210 624h4v4h-4zM218 624h4v4h-4zM226 597h4v4h-4zM234 597h4v4h-4zM226 606h4v4h-4zM234 606h4v4h-4zM226 624h4v4h-4zM234 624h4v4h-4zM242 597h4v4h-4zM250 597h4v4h-4zM242 606h4v4h-4zM250 606h4v4h-4zM242 624h4v4h-4zM250 624h4v4h-4zM258 597h4v4h-4zM266 597h4v4h-4zM258 606h4v4h-4zM266 606h4v4h-4zM258 624h4v4h-4zM266 624h4v4h-4zM274 597h4v4h-4zM282 597h4v4h-4zM274 606h4v4h-4zM282 606h4v4h-4zM274 624h4v4h-4zM282 624h4v4h-4zM290 597h4v4h-4zM298 597h4v4h-4zM290 606h4v4h-4zM298 606h4v4h-4zM290 624h4v4h-4zM298 624h4v4h-4zM306 597h4v4h-4zM314 597h4v4h-4zM306 606h4v4h-4zM314 606h4v4h-4zM306 624h4v4h-4zM314 624h4v4h-4zM322 597h4v4h-4zM330 597h4v4h-4zM322 606h4v4h-4zM330 606h4v4h-4zM322 624h4v4h-4zM330 624h4v4h-4zM338 597h4v4h-4zM346 597h4v4h-4zM338 606h4v4h-4zM346 606h4v4h-4zM338 624h4v4h-4zM346 624h4v4h-4zM354 597h4v4h-4zM362 597h4v4h-4zM354 606h4v4h-4zM362 606h4v4h-4zM354 624h4v4h-4zM362 624h4v4h-4zM1394 606h4v4h-4zM1402 606h4v4h-4zM1394 615h4v4h-4zM1402 615h4v4h-4zM1394 624h4v4h-4zM1402 624h4v4h-4zM386 632h4v4h-4zM386 641h4v4h-4zM394 641h4v4h-4zM386 650h4v4h-4zM394 650h4v4h-4zM386 659h4v4h-4zM394 659h4v4h-4zM882 912h4v4h-4zM882 921h4v4h-4zM890 921h4v4h-4zM882 930h4v4h-4zM890 930h4v4h-4zM882 939h4v4h-4zM890 939h4v4h-4zM1202 1052h4v4h-4zM1210 1052h4v4h-4zM1202 1061h4v4h-4zM1210 1061h4v4h-4zM1210 1070h4v4h-4zM1202 1079h4v4h-4zM1210 1079h4v4h-4zM1202 1087h4v4h-4zM1210 1087h4v4h-4zM1210 1096h4v4h-4zM1202 1105h4v4h-4zM1210 1105h4v4h-4zM1202 1114h4v4h-4zM1210 1114h4v4h-4z"/><path fill="#80f060" d="M1010 212h4v4h-4zM1018 212h4v4h-4zM1010 221h4v4h-4zM1018 221h4v4h-4zM1010 230h4v4h-4zM1018 230h4v4h-4zM1010 239h4v4h-4zM1298 212h4v4h-4zM1306 212h4v4h-4zM1298 221h4v4h-4zM1306 221h4v4h-4zM1306 230h4v4h-4zM1306 239h4v4h-4zM946 247h4v4h-4zM954 247h4v4h-4zM946 256h4v4h-4zM954 256h4v4h-4zM946 265h4v4h-4zM954 265h4v4h-4zM834 317h4v4h-4zM842 317h4v4h-4zM834 326h4v4h-4zM842 326h4v4h-4zM834 335h4v4h-4zM842 335h4v4h-4zM1394 317h4v4h-4zM1402 317h4v4h-4zM1394 326h4v4h-4zM1402 326h4v4h-4zM1394 335h4v4h-4zM1402 335h4v4h-4zM1402 344h4v4h-4zM818 352h4v4h-4zM826 352h4v4h-4zM818 361h4v4h-4zM818 370h4v4h-4zM826 370h4v4h-4zM818 379h4v4h-4zM826 379h4v4h-4zM1442 536h4v4h-4zM1450 536h4v4h-4zM1442 545h4v4h-4zM1450 545h4v4h-4zM1442 554h4v4h-4zM1450 554h4v4h-4zM434 562h4v4h-4zM442 562h4v4h-4zM434 571h4v4h-4zM442 571h4v4h-4zM434 580h4v4h-4zM442 580h4v4h-4zM594 772h4v4h-4zM594 781h4v4h-4zM594 790h4v4h-4zM602 790h4v4h-4zM594 799h4v4h-4zM602 799h4v4h-4zM818 842h4v4h-4zM818 851h4v4h-4zM826 851h4v4h-4zM818 860h4v4h-4zM826 860h4v4h-4zM818 869h4v4h-4zM818 877h4v4h-4zM826 877h4v4h-4zM818 886h4v4h-4zM818 895h4v4h-4zM826 895h4v4h-4zM818 904h4v4h-4zM826 904h4v4h-4zM898 991h4v4h-4zM906 991h4v4h-4zM898 1000h4v4h-4zM906 1000h4v4h-4zM898 1009h4v4h-4zM906 1009h4v4h-4zM914 991h4v4h-4zM922 991h4v4h-4zM914 1000h4v4h-4zM922 1000h4v4h-4zM914 1009h4v4h-4zM922 1009h4v4h-4z"/><path fill="#90f0a0" d="M1330 247h4v4h-4zM1338 247h4v4h-4zM1330 256h4v4h-4zM1338 256h4v4h-4zM1330 265h4v4h-4zM1338 265h4v4h-4zM1338 274h4v4h-4zM770 457h4v4h-4zM778 457h4v4h-4zM770 466h4v4h-4zM778 466h4v4h-4zM770 475h4v4h-4zM778 475h4v4h-4zM778 484h4v4h-4zM530 781h4v4h-4zM538 781h4v4h-4zM530 790h4v4h-4zM538 790h4v4h-4zM530 799h4v4h-4zM538 799h4v4h-4zM882 982h4v4h-4zM882 991h4v4h-4zM882 1000h4v4h-4zM890 1000h4v4h-4zM882 1009h4v4h-4zM890 1009h4v4h-4zM1074 1052h4v4h-4zM1082 1052h4v4h-4zM1074 1061h4v4h-4zM1082 1061h4v4h-4zM1074 1070h4v4h-4zM1082 1070h4v4h-4zM1074 1079h4v4h-4zM1122 1131h4v4h-4zM1130 1131h4v4h-4zM1122 1140h4v4h-4zM1130 1140h4v4h-4zM1122 1149h4v4h-4zM1130 1149h4v4h-4z"/><path fill="#80b0f8" d="M1186 107h4v4h-4zM1194 107h4v4h-4zM1186 116h4v4h-4zM1194 116h4v4h-4zM1194 125h4v4h-4zM786 422h4v4h-4zM794 422h4v4h-4zM786 431h4v4h-4zM794 431h4v4h-4zM786 440h4v4h-4zM786 449h4v4h-4zM1458 457h4v4h-4zM1466 457h4v4h-4zM1458 466h4v4h-4zM1466 466h4v4h-4zM1466 475h4v4h-4zM770 737h4v4h-4zM778 737h4v4h-4zM778 746h4v4h-4zM770 755h4v4h-4zM778 755h4v4h-4zM770 764h4v4h-4zM778 764h4v4h-4zM850 886h4v4h-4zM850 895h4v4h-4zM858 895h4v4h-4zM850 904h4v4h-4zM858 904h4v4h-4zM1410 912h4v4h-4zM1418 912h4v4h-4zM1410 921h4v4h-4zM1418 921h4v4h-4zM1418 939h4v4h-4zM1362 947h4v4h-4zM1362 956h4v4h-4zM1362 965h4v4h-4zM1370 965h4v4h-4zM1362 974h4v4h-4zM1370 974h4v4h-4zM1090 1017h4v4h-4zM1098 1017h4v4h-4zM1090 1026h4v4h-4zM1098 1026h4v4h-4zM1090 1035h4v4h-4zM1186 1017h4v4h-4zM1194 1017h4v4h-4zM1186 1026h4v4h-4zM1194 1026h4v4h-4zM1194 1035h4v4h-4z"/><path fill="#90d8f8" d="M1234 212h4v4h-4zM1242 212h4v4h-4zM1234 221h4v4h-4zM1242 221h4v4h-4zM1242 230h4v4h-4zM1282 212h4v4h-4zM1290 212h4v4h-4zM1282 221h4v4h-4zM1290 221h4v4h-4zM1282 230h4v4h-4zM930 247h4v4h-4zM938 247h4v4h-4zM938 256h4v4h-4zM938 265h4v4h-4zM938 274h4v4h-4zM1410 247h4v4h-4zM1418 247h4v4h-4zM1410 256h4v4h-4zM1418 256h4v4h-4zM1410 265h4v4h-4zM610 422h4v4h-4zM618 422h4v4h-4zM610 431h4v4h-4zM618 431h4v4h-4zM618 440h4v4h-4zM674 457h4v4h-4zM682 457h4v4h-4zM674 466h4v4h-4zM682 466h4v4h-4zM682 475h4v4h-4zM466 527h4v4h-4zM474 527h4v4h-4zM466 536h4v4h-4zM474 545h4v4h-4zM466 554h4v4h-4zM402 562h4v4h-4zM410 562h4v4h-4zM402 571h4v4h-4zM410 571h4v4h-4zM410 580h4v4h-4zM490 711h4v4h-4zM482 720h4v4h-4zM490 720h4v4h-4zM482 729h4v4h-4zM490 729h4v4h-4zM730 711h4v4h-4zM722 720h4v4h-4zM730 720h4v4h-4zM722 729h4v4h-4zM730 729h4v4h-4zM690 746h4v4h-4zM698 746h4v4h-4zM698 755h4v4h-4zM690 764h4v4h-4zM698 764h4v4h-4zM514 781h4v4h-4zM522 781h4v4h-4zM514 790h4v4h-4zM522 790h4v4h-4zM514 799h4v4h-4zM522 799h4v4h-4zM1450 772h4v4h-4zM1450 781h4v4h-4zM1450 790h4v4h-4zM1442 799h4v4h-4zM1450 799h4v4h-4zM1402 886h4v4h-4zM1394 895h4v4h-4zM1402 895h4v4h-4zM1394 904h4v4h-4zM1402 904h4v4h-4zM882 947h4v4h-4zM890 947h4v4h-4zM882 965h4v4h-4zM882 974h4v4h-4zM890 974h4v4h-4zM1274 991h4v4h-4zM1266 1000h4v4h-4zM1274 1000h4v4h-4zM1266 1009h4v4h-4zM1274 1009h4v4h-4zM1306 982h4v4h-4zM1306 991h4v4h-4zM1306 1000h4v4h-4zM1298 1009h4v4h-4zM1306 1009h4v4h-4z"/><path fill="#a8f8f8" d="M1250 212h4v4h-4zM1258 212h4v4h-4zM1258 221h4v4h-4zM1258 230h4v4h-4zM1314 247h4v4h-4zM1322 247h4v4h-4zM1314 256h4v4h-4zM1322 256h4v4h-4zM1394 247h4v4h-4zM1402 247h4v4h-4zM1394 256h4v4h-4zM1402 256h4v4h-4zM1418 282h4v4h-4zM1418 291h4v4h-4zM1410 309h4v4h-4zM1418 309h4v4h-4zM802 387h4v4h-4zM810 387h4v4h-4zM802 396h4v4h-4zM810 396h4v4h-4zM1458 387h4v4h-4zM1466 387h4v4h-4zM1458 396h4v4h-4zM1466 396h4v4h-4zM1466 414h4v4h-4zM1442 422h4v4h-4zM1442 431h4v4h-4zM1450 431h4v4h-4zM1450 440h4v4h-4zM1450 449h4v4h-4zM546 457h4v4h-4zM554 457h4v4h-4zM546 466h4v4h-4zM554 466h4v4h-4zM546 475h4v4h-4zM770 492h4v4h-4zM778 492h4v4h-4zM770 501h4v4h-4zM770 510h4v4h-4zM770 519h4v4h-4zM418 562h4v4h-4zM426 562h4v4h-4zM418 571h4v4h-4zM426 571h4v4h-4zM370 597h4v4h-4zM378 597h4v4h-4zM370 606h4v4h-4zM370 624h4v4h-4zM450 641h4v4h-4zM458 641h4v4h-4zM450 650h4v4h-4zM458 650h4v4h-4zM450 659h4v4h-4zM458 659h4v4h-4zM1466 737h4v4h-4zM1466 755h4v4h-4zM1458 764h4v4h-4zM1466 764h4v4h-4zM786 772h4v4h-4zM786 781h4v4h-4zM786 790h4v4h-4zM786 799h4v4h-4zM794 799h4v4h-4zM834 895h4v4h-4zM842 895h4v4h-4zM834 904h4v4h-4zM842 904h4v4h-4zM946 965h4v4h-4zM954 965h4v4h-4zM946 974h4v4h-4zM954 974h4v4h-4z"/><path fill="#7030f8" d="M1042 212h4v4h-4zM1050 212h4v4h-4zM1042 221h4v4h-4zM1050 221h4v4h-4zM882 247h4v4h-4zM882 256h4v4h-4zM890 256h4v4h-4zM882 265h4v4h-4zM866 317h4v4h-4zM874 317h4v4h-4zM866 326h4v4h-4zM866 335h4v4h-4zM1450 492h4v4h-4zM1450 501h4v4h-4zM1450 510h4v4h-4zM1450 519h4v4h-4zM738 527h4v4h-4zM746 527h4v4h-4zM746 536h4v4h-4zM746 545h4v4h-4zM762 562h4v4h-4zM762 571h4v4h-4zM762 580h4v4h-4zM762 589h4v4h-4zM434 650h4v4h-4zM442 650h4v4h-4zM434 659h4v4h-4zM442 659h4v4h-4zM762 632h4v4h-4zM762 641h4v4h-4zM762 650h4v4h-4zM762 659h4v4h-4zM770 702h4v4h-4zM770 711h4v4h-4zM770 720h4v4h-4zM770 729h4v4h-4zM1338 956h4v4h-4zM1330 965h4v4h-4zM1338 965h4v4h-4zM1330 974h4v4h-4zM1338 974h4v4h-4zM1418 947h4v4h-4zM1410 965h4v4h-4zM1410 974h4v4h-4zM1418 974h4v4h-4zM1010 991h4v4h-4zM1010 1000h4v4h-4zM1018 1000h4v4h-4zM1010 1009h4v4h-4zM1018 1009h4v4h-4z"/><path fill="#7a6af8" d="M1138 72h4v4h-4zM1146 72h4v4h-4zM1138 99h4v4h-4zM1090 107h4v4h-4zM1098 107h4v4h-4zM1098 116h4v4h-4zM1090 195h4v4h-4zM1090 204h4v4h-4zM1098 204h4v4h-4zM1194 195h4v4h-4zM1186 204h4v4h-4zM1194 204h4v4h-4zM1026 212h4v4h-4zM1034 212h4v4h-4zM1026 221h4v4h-4zM1026 230h4v4h-4zM1034 230h4v4h-4zM962 247h4v4h-4zM970 247h4v4h-4zM962 256h4v4h-4zM1378 247h4v4h-4zM1386 247h4v4h-4zM1378 256h4v4h-4zM1386 256h4v4h-4zM818 387h4v4h-4zM818 396h4v4h-4zM818 405h4v4h-4zM1426 387h4v4h-4zM1434 387h4v4h-4zM1434 396h4v4h-4zM1434 405h4v4h-4zM1410 632h4v4h-4zM1418 632h4v4h-4zM1418 641h4v4h-4zM466 676h4v4h-4zM474 685h4v4h-4zM466 694h4v4h-4zM682 755h4v4h-4zM674 764h4v4h-4zM682 764h4v4h-4zM618 790h4v4h-4zM610 799h4v4h-4zM618 799h4v4h-4zM802 807h4v4h-4zM802 834h4v4h-4zM810 834h4v4h-4zM1466 807h4v4h-4zM1466 816h4v4h-4zM1458 834h4v4h-4zM1466 834h4v4h-4zM938 956h4v4h-4zM938 965h4v4h-4zM938 974h4v4h-4zM1194 1105h4v4h-4zM1186 1114h4v4h-4zM1194 1114h4v4h-4z"/><path fill="#8898f8" d="M1154 72h4v4h-4zM1162 72h4v4h-4zM1162 99h4v4h-4zM994 212h4v4h-4zM1002 212h4v4h-4zM994 221h4v4h-4zM1002 221h4v4h-4zM1058 212h4v4h-4zM1066 212h4v4h-4zM1066 221h4v4h-4zM1090 212h4v4h-4zM1098 212h4v4h-4zM1186 212h4v4h-4zM1194 212h4v4h-4zM1218 212h4v4h-4zM1226 212h4v4h-4zM1218 221h4v4h-4zM898 291h4v4h-4zM898 300h4v4h-4zM906 300h4v4h-4zM1410 352h4v4h-4zM1418 352h4v4h-4zM1418 370h4v4h-4zM1450 457h4v4h-4zM1450 466h4v4h-4zM498 492h4v4h-4zM506 492h4v4h-4zM498 501h4v4h-4zM386 597h4v4h-4zM386 606h4v4h-4zM386 624h4v4h-4zM1378 615h4v4h-4zM1386 615h4v4h-4zM410 650h4v4h-4zM402 659h4v4h-4zM410 659h4v4h-4zM1450 711h4v4h-4zM1450 720h4v4h-4zM1450 729h4v4h-4zM546 755h4v4h-4zM546 764h4v4h-4zM554 764h4v4h-4zM898 930h4v4h-4zM906 930h4v4h-4zM898 939h4v4h-4zM1394 974h4v4h-4zM1402 974h4v4h-4zM1242 1000h4v4h-4zM1234 1009h4v4h-4zM1242 1009h4v4h-4zM1282 1000h4v4h-4zM1282 1009h4v4h-4zM1290 1009h4v4h-4z"/><path fill="#b090f8" d="M1170 107h4v4h-4zM1178 107h4v4h-4zM1074 212h4v4h-4zM1082 212h4v4h-4zM1106 212h4v4h-4zM1114 212h4v4h-4zM1170 212h4v4h-4zM1178 212h4v4h-4zM1202 212h4v4h-4zM1210 212h4v4h-4zM978 247h4v4h-4zM986 247h4v4h-4zM1306 247h4v4h-4zM1306 256h4v4h-4zM1346 282h4v4h-4zM1354 282h4v4h-4zM1362 282h4v4h-4zM1362 300h4v4h-4zM1442 387h4v4h-4zM1450 387h4v4h-4zM562 457h4v4h-4zM570 457h4v4h-4zM578 457h4v4h-4zM586 457h4v4h-4zM626 457h4v4h-4zM634 457h4v4h-4zM642 457h4v4h-4zM650 457h4v4h-4zM786 457h4v4h-4zM786 475h4v4h-4zM714 492h4v4h-4zM714 501h4v4h-4zM418 659h4v4h-4zM426 659h4v4h-4zM746 685h4v4h-4zM746 694h4v4h-4zM1450 737h4v4h-4zM1450 764h4v4h-4zM818 825h4v4h-4zM818 834h4v4h-4zM1434 825h4v4h-4zM1434 834h4v4h-4zM866 895h4v4h-4zM866 904h4v4h-4zM1394 912h4v4h-4zM1402 912h4v4h-4zM1314 974h4v4h-4zM1322 974h4v4h-4zM1026 1000h4v4h-4zM1034 1000h4v4h-4zM1026 1009h4v4h-4zM1042 1009h4v4h-4zM1050 1009h4v4h-4zM1258 1000h4v4h-4zM1258 1009h4v4h-4zM1106 1017h4v4h-4zM1114 1017h4v4h-4zM1170 1017h4v4h-4zM1178 1017h4v4h-4z"/><path fill="#c890f8" d="M1106 107h4v4h-4zM882 317h4v4h-4zM834 370h4v4h-4zM802 422h4v4h-4zM802 431h4v4h-4zM594 457h4v4h-4zM666 457h4v4h-4zM1418 589h4v4h-4zM762 597h4v4h-4zM762 606h4v4h-4zM762 624h4v4h-4zM1434 667h4v4h-4zM714 729h4v4h-4zM514 737h4v4h-4zM514 746h4v4h-4zM834 860h4v4h-4zM1418 860h4v4h-4zM1362 930h4v4h-4zM962 974h4v4h-4zM1306 974h4v4h-4zM1378 974h4v4h-4zM1386 974h4v4h-4zM994 1009h4v4h-4zM1002 1009h4v4h-4zM1218 1009h4v4h-4zM1098 1114h4v4h-4zM1138 1131h4v4h-4zM1162 1131h4v4h-4z"/><path fill="#f0a0f8" d="M1386 317h4v4h-4zM514 484h4v4h-4zM514 492h4v4h-4zM770 527h4v4h-4zM498 729h4v4h-4zM786 755h4v4h-4zM802 799h4v4h-4zM1442 807h4v4h-4zM1386 912h4v4h-4zM1066 1009h4v4h-4z"/></svg>
<div class="t" style="left:116px;top:146px;color:#6e9a74;-webkit-text-stroke:0.5px #6e9a74">Toad v0.1</div>
<div class="t" style="left:420px;top:216px;color:#c5a8f0">$</div>
<div class="t" style="left:452px;top:216px;color:#f0f0f0">python mandelbrot.py</div>
<div class="t b" style="left:404px;top:1616px;color:#a0a8cc">❯</div>
<div class="t" style="left:436px;top:1616px;color:#8a8a8f">What would you like to do?</div>
<div class="t" style="left:956px;top:1616px;width:32px;text-align:center;color:#2a2a30">!</div>
<div class="t" style="left:1116px;top:1616px;width:32px;text-align:center;color:#2a2a30">/</div>
<div class="t" style="left:1324px;top:1616px;width:32px;text-align:center;color:#2a2a30">@</div>
<div class="t" style="left:1012px;top:1616px;color:#8a8a8f">shell</div>
<div class="t" style="left:1172px;top:1616px;color:#8a8a8f">commands</div>
<div class="t" style="left:1380px;top:1616px;color:#8a8a8f">files</div>
<div class="t" style="left:388px;top:1721px;color:#c9b6f0"> claude-code-acp </div>
<div class="t" style="left:676px;top:1721px;color:#f2cc8f">~/sandbox</div>
<div class="t" style="left:2084px;top:1721px;color:#a6acc8"> Always Ask </div>
<svg class="abs" style="left:0;top:0" width="2676" height="2008" viewBox="0 0 2676 2008" fill="none" stroke-linejoin="round"><path d="M133 1806L140 1799.5V1803H144V1797.5H147.5V1809.5H140V1813Z" stroke="#e6e6e6" stroke-width="1.3"/><path d="M293 1806L300 1799.5V1803H304V1797.5H307.5V1809.5H300V1813Z" stroke="#e6e6e6" stroke-width="1.3"/><path d="M268 1797.5L261.5 1805H265V1815.5H271V1805H274.5Z" stroke="#e6e6e6" stroke-width="1.3"/><path d="M492 1815V1799M485.5 1805.5L492 1799L498.5 1805.5" stroke="#ededed" stroke-width="2.6"/><path d="M588 1797V1813M581.5 1806.5L588 1813L594.5 1806.5" stroke="#ededed" stroke-width="2.6"/></svg>
<div class="t" style="left:164px;top:1791px;color:#a8a8ae">Send</div>
<div class="t b" style="left:276px;top:1791px;color:#e6e6e6">+</div>
<div class="t" style="left:324px;top:1791px;color:#a8a8ae">Line</div>
<div class="t b" style="left:420px;top:1791px;color:#ededed">alt+</div>
<div class="t b" style="left:516px;top:1791px;color:#ededed">alt+</div>
<div class="t" style="left:612px;top:1791px;color:#a8a8ae">Cursor</div>
<div class="t b" style="left:740px;top:1791px;color:#b0b0b4">esc</div>
<div class="t" style="left:804px;top:1791px;color:#7c7c82">Cancel</div>
<div class="t b" style="left:932px;top:1791px;color:#ededed">^m</div>
<div class="t" style="left:980px;top:1791px;color:#a8a8ae">Modes</div>
<div class="t b" style="left:1092px;top:1791px;color:#ededed">^,</div>
<div class="t" style="left:1140px;top:1791px;color:#a8a8ae">Settings</div>
<div class="t b" style="left:1300px;top:1791px;color:#ededed">f3</div>
<div class="t" style="left:1348px;top:1791px;color:#a8a8ae">Files</div>
<div class="t b" style="left:2356px;top:1791px;color:#ededed">^p</div>
<div class="t" style="left:2404px;top:1791px;color:#a8a8ae">palette</div>
<svg class="abs" style="left:1840px;top:1220px" width="60" height="80" viewBox="1840 1220 60 80"><path d="M1857 1235L1857 1272.5L1867.8 1268.3L1875.2 1285.6Q1877.8 1287.2 1880.6 1283.6L1873.9 1266.6L1885 1265.6Z" fill="#000" stroke="#fff" stroke-width="5.6" stroke-linejoin="round" paint-order="stroke"/></svg>
<div class="wb"></div>
</body></html>
